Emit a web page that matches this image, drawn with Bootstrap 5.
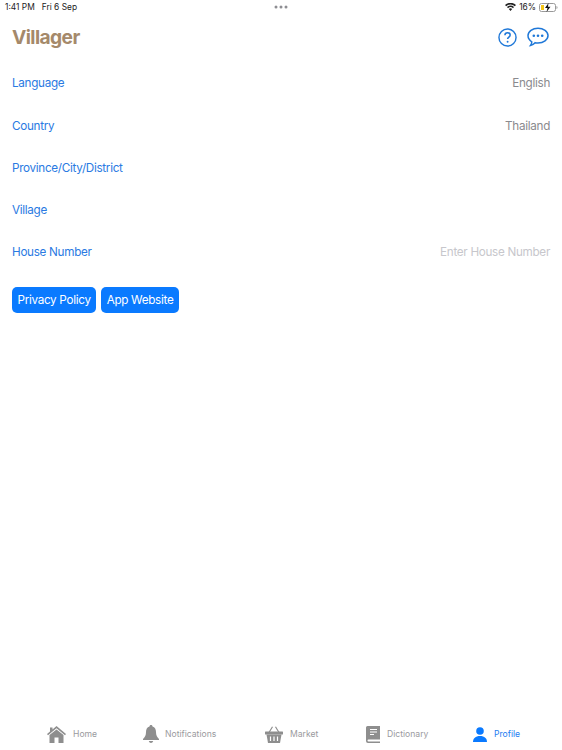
<!DOCTYPE html>
<html lang="en">
  <head>
    <meta charset="utf-8" />
    <title>Villager</title>
    <link href="https://cdn.jsdelivr.net/npm/bootstrap@5.3.0/dist/css/bootstrap.min.css" rel="stylesheet">
    <script src="https://cdn.jsdelivr.net/npm/bootstrap@5.3.0/dist/js/bootstrap.bundle.min.js"></script>
    <meta name="viewport" content="width=device-width, initial-scale=1">
    <style>
      html, body { height: 100%; }
      body { font-family: Inter, "Liberation Sans", sans-serif; background: #fff; }
      .app-screen { height: 750px; width: 562px; overflow: hidden; }
      .status-line { height: 14px; padding: 0 4px 0 5px; font-size: 8.4px; line-height: 14px; color: #222; }
      .status-left { gap: 7px; }
      .status-dots { gap: 2px; }
      .status-dots span { width: 3px; height: 3px; border-radius: 50%; background: #8e8e93; }
      .status-right { gap: 3px; }
      .head-line { height: 46px; padding: 0 13px 0 12px; }
      .app-title { font-size: 19.2px; font-weight: 700; color: #a5896a; margin: 0; line-height: 46px; letter-spacing: -.6px; }
      .head-icons { gap: 10px; }
      .form-list { padding-top: 3px; }
      .form-line { height: 42.25px; padding: 0 12px; font-size: 11.7px; letter-spacing: -.3px; }
      .form-key { color: #2a7ae2; }
      .form-val { color: #8a8a8e; }
      .form-hint { color: #c7c7cc; }
      .link-btns { padding: 13px 12px 0; gap: 5px; }
      .blue-btn { background: #0a7aff; color: #fff; border: 0; border-radius: 5px; font-size: 11.7px; letter-spacing: -.3px; height: 26px; line-height: 26px; padding: 0 5.5px; }
      .tab-strip { height: 34px; margin-top: auto; padding-top: 2px; padding-left: 47px; }
      .tab-item { font-size: 8.6px; color: #9a9a9e; gap: 7px; }
      .tab-item.active-tab { color: #1d7cf2; }
      .tab-home { width: 96px; }
      .tab-bell { width: 122px; gap: 6px; }
      .tab-basket { width: 101px; }
      .tab-book { width: 107px; }
    </style>
  </head>
  <body>
    <div class="app-screen d-flex flex-column">
      <!-- status bar -->
      <div class="status-line d-flex justify-content-between align-items-center position-relative">
        <div class="status-left d-flex"><span>1:41 PM</span><span>Fri 6 Sep</span></div>
        <div class="status-dots d-flex position-absolute top-50 start-50 translate-middle"><span></span><span></span><span></span></div>
        <div class="status-right d-flex align-items-center">
          <svg width="11" height="8" viewBox="0 0 11 8"><path d="M5.500 8 3.800 6a2.500 2.500 0 0 1 3.400 0zM3 5.200 2 4a5 5 0 0 1 7 0L8 5.200a3.600 3.600 0 0 0-5 0zM1.200 3.300 0 2a8 8 0 0 1 11 0L9.800 3.300a6.300 6.300 0 0 0-8.600 0z" fill="#222"/></svg>
          <span>16%</span>
          <svg width="19" height="9" viewBox="0 0 19 9"><rect x=".5" y=".5" width="16" height="8" rx="2" fill="none" stroke="#999"/><rect x="2" y="2" width="3" height="5" fill="#f5c518"/><path d="M17.500 3v3c.8-.3 1-1 1-1.500s-.2-1.200-1-1.500z" fill="#999"/><path d="M9.500 0 6 5h2.500L7.500 9 11.500 3.800H9z" fill="#111"/></svg>
        </div>
      </div>

      <div class="head-line d-flex justify-content-between align-items-center">
        <h1 class="app-title">Villager</h1>
        <div class="head-icons d-flex align-items-center">
          <svg width="19" height="19" viewBox="0 0 20 20"><circle cx="10" cy="10" r="9" fill="none" stroke="#1f78d8" stroke-width="1.500"/><path d="M7.300 7.700c0-1.700 1.200-2.700 2.800-2.700s2.700 1 2.700 2.400c0 2.200-2.700 2.200-2.700 4.300" fill="none" stroke="#1f78d8" stroke-width="1.600"/><circle cx="10.100" cy="14.400" r="1" fill="#1f78d8"/></svg>
          <svg width="22" height="20" viewBox="0 0 22 20"><path d="M11 1.200c5.500 0 10 3.200 10 7.400s-4.500 7.400-10 7.400c-1 0-2-.1-2.900-.3C6.900 17 5 18.300 3.500 18.500c.8-1 1.300-2.400 1.300-3.700C2.500 13.400 1 11.200 1 8.600 1 4.400 5.500 1.200 11 1.200z" fill="none" stroke="#1f78d8" stroke-width="1.500"/><circle cx="6.800" cy="8.700" r="1.300" fill="#1f78d8"/><circle cx="11" cy="8.700" r="1.300" fill="#1f78d8"/><circle cx="15.200" cy="8.700" r="1.300" fill="#1f78d8"/></svg>
        </div>
      </div>

      <div class="form-list">
        <div class="form-line d-flex justify-content-between align-items-center"><span class="form-key">Language</span><span class="form-val">English</span></div>
        <div class="form-line d-flex justify-content-between align-items-center"><span class="form-key">Country</span><span class="form-val">Thailand</span></div>
        <div class="form-line d-flex justify-content-between align-items-center"><span class="form-key">Province/City/District</span></div>
        <div class="form-line d-flex justify-content-between align-items-center"><span class="form-key">Village</span></div>
        <div class="form-line d-flex justify-content-between align-items-center"><span class="form-key">House Number</span><span class="form-hint">Enter House Number</span></div>
      </div>

      <div class="link-btns d-flex">
        <button type="button" class="btn blue-btn">Privacy Policy</button>
        <button type="button" class="btn blue-btn">App Website</button>
      </div>

      <!-- bottom tabs -->
      <div class="tab-strip d-flex align-items-center">
        <div class="tab-item tab-home d-flex align-items-center">
          <svg width="19" height="17" viewBox="0 0 19 17"><path d="M9.500 0 19 8l-1 1.200-8.500-7-8.500 7L0 8l3-2.500V1.500h2.500v2z" fill="#8e8e8e"/><path d="M9.500 3.500 16.500 9v8h-5v-5.500h-4V17h-5V9z" fill="#8e8e8e"/></svg>
          <span>Home</span>
        </div>
        <div class="tab-item tab-bell d-flex align-items-center">
          <svg width="16" height="18" viewBox="0 0 16 18"><path d="M8 0c1 0 1.500.7 1.500 1.400C12 2 13 4.500 13 7c0 3.500 1 5 3 7v1H0v-1c2-2 3-3.500 3-7 0-2.500 1-5 3.500-5.600C6.500.7 7 0 8 0z" fill="#8e8e8e"/><path d="M5.800 16h4.400c-.3 1.200-1.200 2-2.200 2s-1.900-.8-2.200-2z" fill="#8e8e8e"/></svg>
          <span>Notifications</span>
        </div>
        <div class="tab-item tab-basket d-flex align-items-center">
          <svg width="18" height="17" viewBox="0 0 18 17"><path d="M4 6.500 7.500.8M14 6.500 10.500.8" stroke="#8e8e8e" stroke-width="1.200" fill="none"/><rect y="5.500" width="18" height="3" rx=".5" fill="#8e8e8e"/><path d="M1.500 8.500h15L15 17H3z" fill="#8e8e8e"/><path d="M5.500 10.500v4.500M9 10.500v4.500M12.500 10.500v4.500" stroke="#fff" stroke-width="1.200"/></svg>
          <span>Market</span>
        </div>
        <div class="tab-item tab-book d-flex align-items-center">
          <svg width="14" height="17" viewBox="0 0 14 17"><path d="M1.500 0H14v13.500H2.500a1 1 0 0 0 0 2H14V17H2a2 2 0 0 1-2-2V1.500A1.500 1.500 0 0 1 1.500 0z" fill="#8e8e8e"/><path d="M4 3.500h7M4 6h7M4 8.500h4" stroke="#fff" stroke-width="1"/></svg>
          <span>Dictionary</span>
        </div>
        <div class="tab-item active-tab d-flex align-items-center">
          <svg width="14" height="15" viewBox="0 0 14 15"><circle cx="7" cy="4" r="3.800" fill="#0a7aff"/><path d="M0 15c0-3.500 2.500-6 7-6s7 2.500 7 6z" fill="#0a7aff"/></svg>
          <span>Profile</span>
        </div>
      </div>
    </div>
  </body>
</html>
